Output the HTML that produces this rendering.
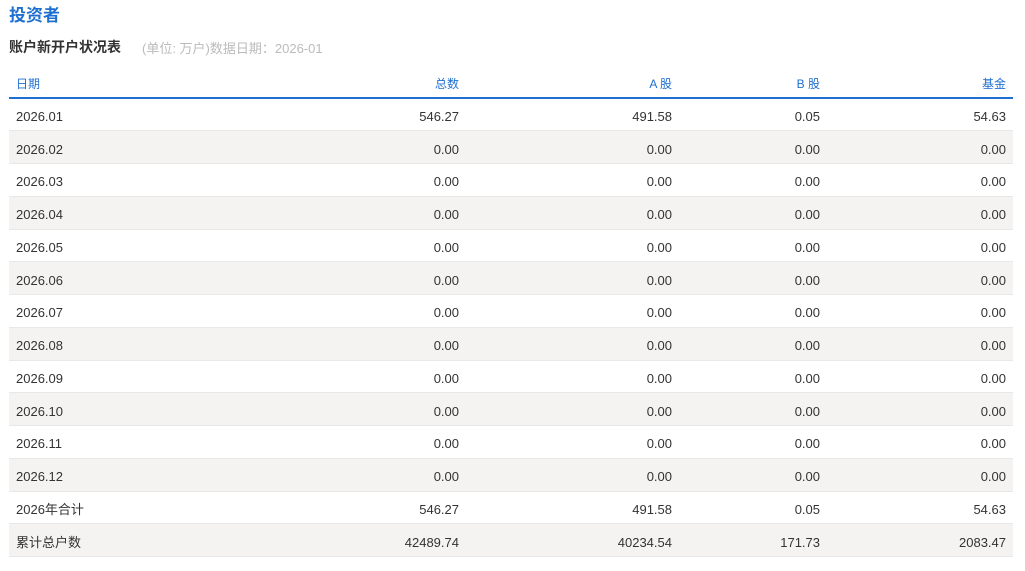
<!DOCTYPE html>
<html><head><meta charset="utf-8"><style>
body{margin:0;background:#fff;font-family:"Liberation Sans","Noto Sans CJK SC",sans-serif;width:1025px;height:571px;overflow:hidden}
.t{position:absolute;left:9px;top:1px;font-size:17px;font-weight:bold;color:#1f6fd1}
.s{position:absolute;left:9px;top:37px;font-size:14px;font-weight:bold;color:#333}
.g{position:absolute;left:142px;top:38px;font-size:13px;color:#bbb}
table{position:absolute;left:9px;top:72px;width:1004px;border-collapse:collapse;font-size:13px;color:#333}
th{height:26px;font-weight:normal;color:#1f6fd1;font-size:12px;border-bottom:2px solid #1f6fd1;text-align:right;padding:0 7px 1px;vertical-align:middle;line-height:14px;box-sizing:border-box}
td{height:32.75px;line-height:16px;border-bottom:1px solid #e8e8e8;text-align:right;padding:5px 7px 0;box-sizing:border-box}
th:first-child,td:first-child{text-align:left}
tr:nth-child(odd) td{background:#f4f3f2}
</style></head><body>
<div class="t">投资者</div>
<div class="s">账户新开户状况表</div>
<div class="g">(单位: 万户)数据日期：2026-01</div>
<table>
<colgroup><col style="width:230px"><col style="width:227px"><col style="width:213px"><col style="width:148px"><col></colgroup>
<tr><th>日期</th><th>总数</th><th>A 股</th><th>B 股</th><th>基金</th></tr>
<tr><td>2026.01</td><td>546.27</td><td>491.58</td><td>0.05</td><td>54.63</td></tr>
<tr><td>2026.02</td><td>0.00</td><td>0.00</td><td>0.00</td><td>0.00</td></tr>
<tr><td>2026.03</td><td>0.00</td><td>0.00</td><td>0.00</td><td>0.00</td></tr>
<tr><td>2026.04</td><td>0.00</td><td>0.00</td><td>0.00</td><td>0.00</td></tr>
<tr><td>2026.05</td><td>0.00</td><td>0.00</td><td>0.00</td><td>0.00</td></tr>
<tr><td>2026.06</td><td>0.00</td><td>0.00</td><td>0.00</td><td>0.00</td></tr>
<tr><td>2026.07</td><td>0.00</td><td>0.00</td><td>0.00</td><td>0.00</td></tr>
<tr><td>2026.08</td><td>0.00</td><td>0.00</td><td>0.00</td><td>0.00</td></tr>
<tr><td>2026.09</td><td>0.00</td><td>0.00</td><td>0.00</td><td>0.00</td></tr>
<tr><td>2026.10</td><td>0.00</td><td>0.00</td><td>0.00</td><td>0.00</td></tr>
<tr><td>2026.11</td><td>0.00</td><td>0.00</td><td>0.00</td><td>0.00</td></tr>
<tr><td>2026.12</td><td>0.00</td><td>0.00</td><td>0.00</td><td>0.00</td></tr>
<tr><td>2026年合计</td><td>546.27</td><td>491.58</td><td>0.05</td><td>54.63</td></tr>
<tr><td>累计总户数</td><td>42489.74</td><td>40234.54</td><td>171.73</td><td>2083.47</td></tr>
</table>
</body></html>
